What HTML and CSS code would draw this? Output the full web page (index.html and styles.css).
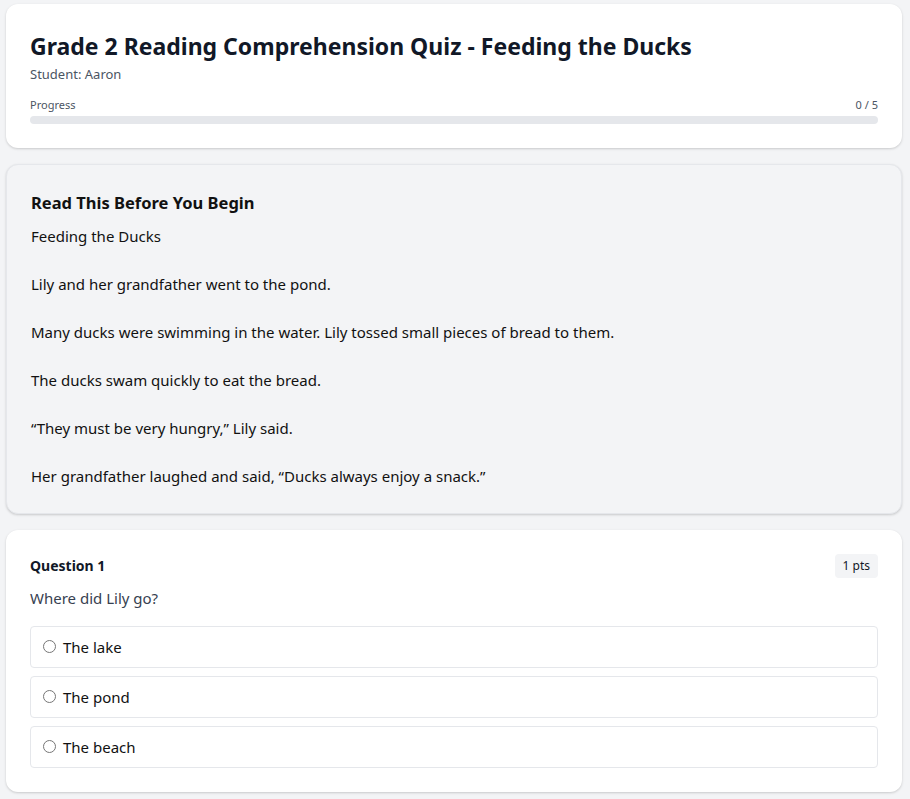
FILE: index.html
```html
<!DOCTYPE html>
<html lang="en">
<head>
<meta charset="utf-8">
<title>Grade 2 Reading Comprehension Quiz - Feeding the Ducks</title>
<link rel="stylesheet" href="styles.css">
</head>
<body>
<main class="container">
  <section class="card header-card">
    <h1 class="title">Grade 2 Reading Comprehension Quiz - Feeding the Ducks</h1>
    <p class="student">Student: Aaron</p>
    <div class="progress-row">
      <span>Progress</span>
      <span>0 / 5</span>
    </div>
    <div class="progress-track"><div class="progress-fill" style="width:0%"></div></div>
  </section>

  <section class="card passage-card">
    <h2 class="passage-title">Read This Before You Begin</h2>
    <div class="passage-text">Feeding the Ducks

Lily and her grandfather went to the pond.

Many ducks were swimming in the water. Lily tossed small pieces of bread to them.

The ducks swam quickly to eat the bread.

“They must be very hungry,” Lily said.

Her grandfather laughed and said, “Ducks always enjoy a snack.”</div>
  </section>

  <section class="card question-card">
    <div class="question-head">
      <h3 class="question-label">Question 1</h3>
      <span class="points">1 pts</span>
    </div>
    <p class="question-text">Where did Lily go?</p>
    <div class="options">
      <label class="option"><input type="radio" name="q1"><span>The lake</span></label>
      <label class="option"><input type="radio" name="q1"><span>The pond</span></label>
      <label class="option"><input type="radio" name="q1"><span>The beach</span></label>
    </div>
  </section>
</main>
</body>
</html>
```

FILE: styles.css
```css
* { box-sizing: border-box; }

html, body {
  margin: 0;
  padding: 0;
  background: #f3f4f6;
}

body {
  font-family: "Noto Sans", "Open Sans", "Liberation Sans", sans-serif;
  color: #111827;
}

.container {
  width: 896px;
  margin: 0 0 0 6px;
  padding: 4px 0 8px;
  display: flex;
  flex-direction: column;
  gap: 16px;
}

.card {
  background: #ffffff;
  border-radius: 12px;
  padding: 24px;
  box-shadow: 0 1px 3px rgba(0,0,0,0.12), 0 1px 2px rgba(0,0,0,0.06);
}

/* header */
.title {
  margin: 2px 0 0;
  font-size: 23px;
  line-height: 32px;
  font-weight: 700;
  color: #111827;
}

.student {
  margin: 2px 0 0;
  font-size: 13px;
  line-height: 20px;
  color: #4b5563;
}

.progress-row {
  margin-top: 13px;
  display: flex;
  justify-content: space-between;
  font-size: 11px;
  line-height: 16px;
  color: #4b5563;
}

.progress-track {
  margin-top: 3px;
  height: 8px;
  border-radius: 4px;
  background: #e5e7eb;
  overflow: hidden;
}

.progress-fill {
  height: 100%;
  background: #2563eb;
}

/* passage */
.passage-card {
  background: #f3f4f6;
  border: 1px solid #e5e7eb;
  padding: 24px 24px 25px;
}

.passage-title {
  margin: 0;
  font-size: 16.5px;
  line-height: 28px;
  font-weight: 700;
  color: #111111;
}

.passage-text {
  margin-top: 7px;
  white-space: pre-wrap;
  font-size: 15px;
  line-height: 24px;
  color: #111111;
}

/* question */
.question-head {
  display: flex;
  justify-content: space-between;
  align-items: center;
}

.question-label {
  margin: 0;
  font-size: 14px;
  line-height: 24px;
  font-weight: 700;
  color: #111827;
}

.points {
  background: #f3f4f6;
  border-radius: 4px;
  padding: 0 8px;
  font-size: 12px;
  line-height: 24px;
  color: #111827;
}

.question-text {
  margin: 8px 0 0;
  font-size: 15px;
  line-height: 24px;
  color: #374151;
}

.options {
  margin-top: 16px;
  display: flex;
  flex-direction: column;
  gap: 8px;
}

.option {
  display: flex;
  align-items: center;
  gap: 7px;
  height: 42px;
  padding: 0 12px;
  border: 1px solid #e5e7eb;
  border-radius: 4px;
  font-size: 15px;
  color: #111111;
  cursor: pointer;
}

.option input {
  margin: 0;
  width: 13px;
  height: 13px;
  position: relative;
  top: -1px;
}
```
